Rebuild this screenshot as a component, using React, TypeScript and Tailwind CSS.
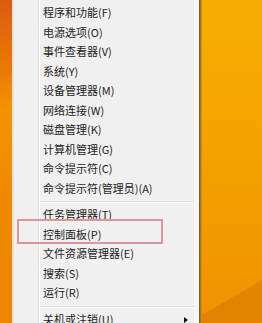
const TOP_ITEMS = [
  '程序和功能(F)',
  '电源选项(O)',
  '事件查看器(V)',
  '系统(Y)',
  '设备管理器(M)',
  '网络连接(W)',
  '磁盘管理(K)',
  '计算机管理(G)',
  '命令提示符(C)',
  '命令提示符(管理员)(A)',
]

const MID_ITEMS = ['任务管理器(T)', '控制面板(P)', '文件资源管理器(E)', '搜索(S)', '运行(R)']

function Item({ label, submenu }: { label: string; submenu?: boolean }) {
  return (
    <div className="h-[19.5px] shrink-0 flex items-center pl-[3px] pr-[6px] relative">
      <span className="whitespace-nowrap leading-none">{label}</span>
      {submenu && (
        <span className="absolute right-[6px] top-[7px] w-0 h-0 border-y-[3.5px] border-y-transparent border-l-[4px] border-l-[#111]" />
      )}
    </div>
  )
}

function Separator({ offset }: { offset: string }) {
  return (
    <div className={`h-[7px] shrink-0 ${offset}`}>
      <div className="h-px bg-[#dcdcdc] mr-[5px]" />
      <div className="h-px bg-[#fbfbfb] mr-[5px]" />
    </div>
  )
}

export default function App() {
  return (
    <div className="w-[262px] h-[323px] flex overflow-hidden relative font-['Noto_Sans_CJK_SC',sans-serif] text-[11px] text-[#1c1c1c]">
      {/* desktop strip on the left */}
      <div className="w-[12px] shrink-0 bg-[linear-gradient(180deg,#dc5c10_0%,#ec7a06_22%,#f29400_34%,#ef8a00_60%,#ee8600_100%)]" />

      {/* the Win+X menu */}
      <div className="w-[187px] shrink-0 flex bg-[#f0f0f0] border-l-2 border-[#e2e2e2]">
        <div className="w-[25px] shrink-0 border-r border-[#e0e1e1]" />
        <div className="flex-1 flex flex-col border-l border-[#fcfcfc] pt-[3px] border-r-[5px] border-r-[#f5f5f5]">
          {TOP_ITEMS.map(t => <Item key={t} label={t} />)}
          <div className="h-[7px] shrink-0 pt-[3px]">
            <div className="h-px bg-[#dcdcdc]" />
            <div className="h-px bg-[#fbfbfb]" />
          </div>
          {MID_ITEMS.map(t => <Item key={t} label={t} />)}
          <div className="h-[7px] shrink-0 pt-[3.5px]">
            <div className="h-px bg-[#dcdcdc]" />
            <div className="h-px bg-[#fbfbfb]" />
          </div>
          <Item label="关机或注销(U)" submenu />
        </div>
      </div>

      {/* drop shadow */}
      <div className="w-[3px] shrink-0 bg-[linear-gradient(90deg,#6e5424,#a47a18,#e29a08)]" />

      {/* desktop on the right */}
      <div className="flex-1 bg-[linear-gradient(150deg,transparent_88%,rgba(205,100,0,0.35)_88%),linear-gradient(180deg,#f7ae02_0%,#f5a600_35%,#f39a00_70%,#f19300_100%)]" />

      {/* highlight annotation */}
      <div className="absolute left-[17px] top-[219px] w-[146px] h-[25px] border-2 border-[#dc959d]" />
    </div>
  )
}
